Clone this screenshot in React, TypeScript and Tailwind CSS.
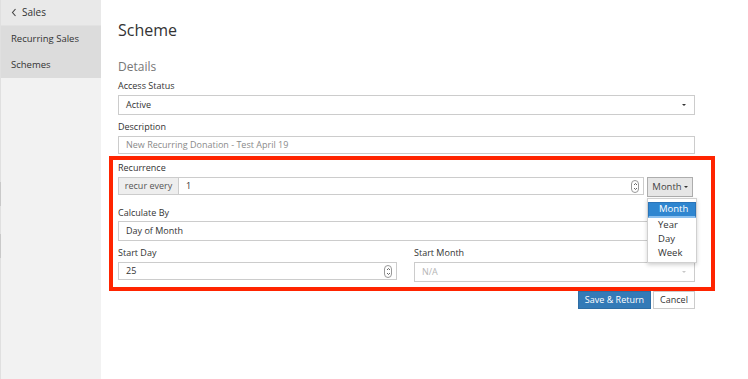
import React from 'react';

const font = { fontFamily: '"Open Sans", "Liberation Sans", sans-serif' };

const Caret = ({ light }: { light?: boolean }) => (
  <span
    className={`inline-block w-0 h-0 border-l-[2px] border-r-[2px] border-t-[2px] border-l-transparent border-r-transparent ${
      light ? 'border-t-[#c8c8c8]' : 'border-t-[#333]'
    }`}
  />
);

const Spinner = () => (
  <span className="flex flex-col items-center justify-center w-[8px] h-[13px] rounded-full border border-[#999] bg-white">
    <svg width="5" height="9" viewBox="0 0 5 9" fill="none" stroke="#555" strokeWidth="0.9">
      <path d="M1 3 L2.5 1.5 L4 3" />
      <path d="M1 6 L2.5 7.5 L4 6" />
    </svg>
  </span>
);

const Label = ({ children }: { children: React.ReactNode }) => (
  <div className="h-[12px] leading-[12px] text-[9px] text-[#333]">{children}</div>
);

const Select = ({ value, disabled }: { value: string; disabled?: boolean }) => (
  <div
    className={`h-[20px] border border-[#cccccc] flex items-center justify-between pl-[7px] pr-[8px] text-[9px] bg-white ${
      disabled ? 'text-[#b5b5b5]' : 'text-[#333]'
    }`}
  >
    <span>{value}</span>
    <Caret light={disabled} />
  </div>
);

export default function App() {
  return (
    <div className="w-[748px] h-[379px] flex bg-white overflow-hidden" style={font}>
      {/* sidebar */}
      <div className="relative w-[101px] h-full bg-[#f2f2f2] border-l border-[#e0e0e0] flex flex-col text-[9.5px] text-[#333]">
        <div className="h-[26px] bg-[#e9e9e9] flex items-center pl-[10px] gap-[5px] border-b border-[#e2e2e2]">
          <svg width="6" height="9" viewBox="0 0 6 9" fill="none" stroke="#444" strokeWidth="1.1">
            <path d="M4.5 1 L1.5 4.5 L4.5 8" />
          </svg>
          <span className="text-[10px]">Sales</span>
        </div>
        <div className="h-[26px] bg-[#dcdcdc] flex items-center pl-[10px]">Recurring Sales</div>
        <div className="h-[26px] bg-[#dcdcdc] flex items-center pl-[10px]">Schemes</div>
        <div className="absolute -left-px top-[182px] w-px h-[24px] bg-[#c9c9c9]" />
        <div className="absolute -left-px top-[234px] w-px h-[24px] bg-[#c9c9c9]" />
      </div>

      {/* main */}
      <div className="flex-1 pl-[17px] pt-[17px]">
        <div className="w-[577px] flex flex-col">
          <div className="mt-[3px] h-[20px] leading-[20px] text-[16px] text-[#333]">Scheme</div>
          <div className="mt-[19px] h-[16px] leading-[16px] text-[12px] text-[#777]">Details</div>

          <div className="mt-[5px]">
            <Label>Access Status</Label>
          </div>
          <div className="mt-[3px]">
            <Select value="Active" />
          </div>

          <div className="mt-[6px]">
            <Label>Description</Label>
          </div>
          <div className="mt-[3px] h-[18px] border border-[#cccccc] flex items-center pl-[7px] text-[9px] text-[#8a8a8a]">
            New Recurring Donation - Test April 19
          </div>

          {/* highlighted section */}
          <div className="relative mt-[8px]">
            <div className="absolute -left-[9px] -top-[6px] -right-[20px] -bottom-[9px] border-[4px] border-[#ff2400] pointer-events-none" />

            <Label>Recurrence</Label>
            <div className="mt-[3px] h-[20px] flex items-start">
              <div className="h-[18px] w-[61px] border border-[#cccccc] bg-[#eeeeee] flex items-center justify-center text-[9px] text-[#555]">
                recur every
              </div>
              <div className="h-[18px] flex-1 border border-l-0 border-[#cccccc] flex items-center justify-between pl-[7px] pr-[4px] text-[9px] text-[#333]">
                <span>1</span>
                <Spinner />
              </div>
              <div className="relative ml-[3px] mr-[2px]">
                <div className="h-[20px] w-[46px] border border-[#adadad] bg-[#e6e6e6] flex items-center justify-center gap-[2px] text-[9.5px] text-[#444]">
                  <span>Month</span>
                  <Caret />
                </div>
                <div className="absolute left-0 top-[21px] w-[50px] bg-white border border-[#d0d0d0] shadow-[0_2px_4px_rgba(0,0,0,0.18)] pt-[3px] pb-[2px] text-[9.5px] text-[#333] z-10">
                  <div className="h-[16px] bg-[#2f86d0] border border-[#2a74b8] border-b-2 border-b-[#8cc0ee] text-white flex items-center pl-[10px]">
                    Month
                  </div>
                  <div className="h-[14px] flex items-center pl-[10px]">Year</div>
                  <div className="h-[14px] flex items-center pl-[10px]">Day</div>
                  <div className="h-[14px] flex items-center pl-[10px]">Week</div>
                </div>
              </div>
            </div>

            <div className="mt-[10px]">
              <Label>Calculate By</Label>
            </div>
            <div className="mt-[2px] h-[20px] border border-[#cccccc] flex items-center pl-[7px] text-[9px] text-[#333]">
              Day of Month
            </div>

            <div className="mt-[6px] flex gap-[17px]">
              <div className="w-[279px] flex flex-col">
                <Label>Start Day</Label>
                <div className="mt-[3px] h-[18px] border border-[#cccccc] flex items-center justify-between pl-[7px] pr-[4px] text-[9px] text-[#333]">
                  <span>25</span>
                  <Spinner />
                </div>
              </div>
              <div className="flex-1 flex flex-col">
                <Label>Start Month</Label>
                <div className="mt-[3px]">
                  <Select value="N/A" disabled />
                </div>
              </div>
            </div>
          </div>

          <div className="mt-[9px] flex justify-end gap-[2px]">
            <div className="h-[18px] w-[73px] bg-[#337ab7] border border-[#2e6da4] text-white text-[9px] flex items-center justify-center">
              Save &amp; Return
            </div>
            <div className="h-[18px] w-[42px] bg-white border border-[#cccccc] text-[#333] text-[9px] flex items-center justify-center">
              Cancel
            </div>
          </div>
        </div>
      </div>
    </div>
  );
}
